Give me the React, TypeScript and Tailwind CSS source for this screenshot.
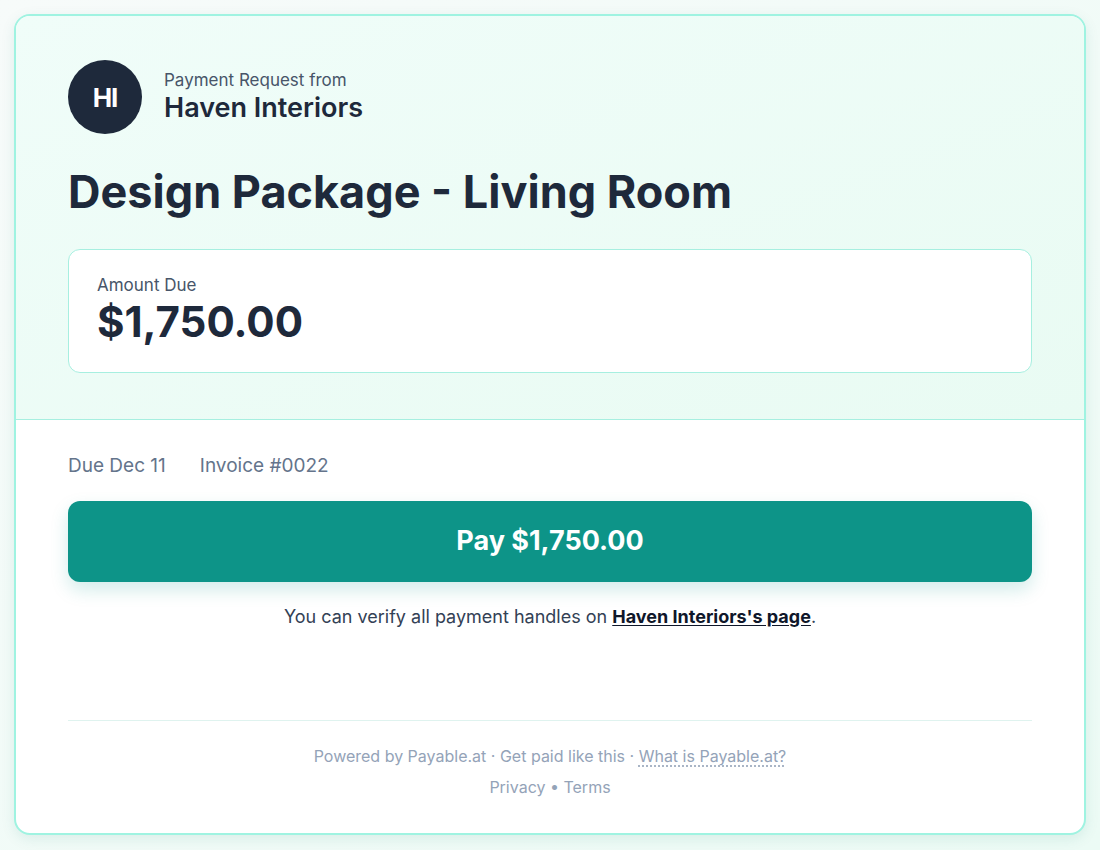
export default function App() {
  return (
    <div
      className="min-h-screen w-full bg-gradient-to-br from-[#f7fbfa] to-[#ecfbf5] p-[14px]"
      style={{ fontFamily: 'Inter, "Noto Sans", sans-serif' }}
    >
      <div className="overflow-hidden rounded-2xl border-2 border-[#9ff3e1] bg-white shadow-[0_4px_14px_rgba(15,118,110,0.10)]">
        {/* header */}
        <div className="border-b border-[#a7efe0] bg-gradient-to-br from-[#f0fdf9] to-[#e9fbf3] px-[52px] pt-[44px] pb-[46px]">
          <div className="flex items-center gap-[22px]">
            <div className="flex h-[74px] w-[74px] items-center justify-center rounded-full bg-[#1e293b] text-[26px] font-bold tracking-[-1px] text-white">
              HI
            </div>
            <div className="flex flex-col">
              <span className="text-[17px] leading-[22px] text-[#475569]">Payment Request from</span>
              <span className="text-[27px] leading-[34px] font-semibold text-[#1e293b]">Haven Interiors</span>
            </div>
          </div>
          <h1 className="mt-[31px] text-[45px] leading-[53px] font-bold text-[#1e293b]">
            Design Package - Living Room
          </h1>
          <div className="mt-[31px] rounded-xl border border-[#a7efe0] bg-white px-[28px] pt-[24px] pb-[24px]">
            <div className="text-[17px] leading-[22px] text-[#475569]">Amount Due</div>
            <div className="text-[42px] leading-[52px] font-bold text-[#1e293b]">$1,750.00</div>
          </div>
        </div>

        {/* body */}
        <div className="px-[52px] pt-[32px] pb-[35px]">
          <div className="flex gap-[34px] text-[19px] leading-[27px] text-[#64748b]">
            <span>Due Dec 11</span>
            <span>Invoice #0022</span>
          </div>
          <button className="mt-[22px] flex h-[81px] w-full items-center justify-center rounded-xl bg-[#0d9488] text-[27px] font-bold text-white shadow-[0_8px_18px_rgba(13,148,136,0.18)]">
            Pay $1,750.00
          </button>
          <p className="mt-[22px] text-center text-[18px] leading-[26px] text-[#334155]">
            You can verify all payment handles on{' '}
            <a className="font-bold text-[#0f172a] underline underline-offset-2">Haven Interiors's page</a>.
          </p>
          <div className="mt-[90px] border-t border-[#dff3ef] pt-[24px] text-center text-[16px] text-[#94a3b8]">
            <div className="leading-[22px]">
              Powered by Payable.at · Get paid like this ·{' '}
              <a className="underline decoration-dotted underline-offset-4">What is Payable.at?</a>
            </div>
            <div className="mt-[9px] leading-[22px]">Privacy • Terms</div>
          </div>
        </div>
      </div>
    </div>
  );
}
